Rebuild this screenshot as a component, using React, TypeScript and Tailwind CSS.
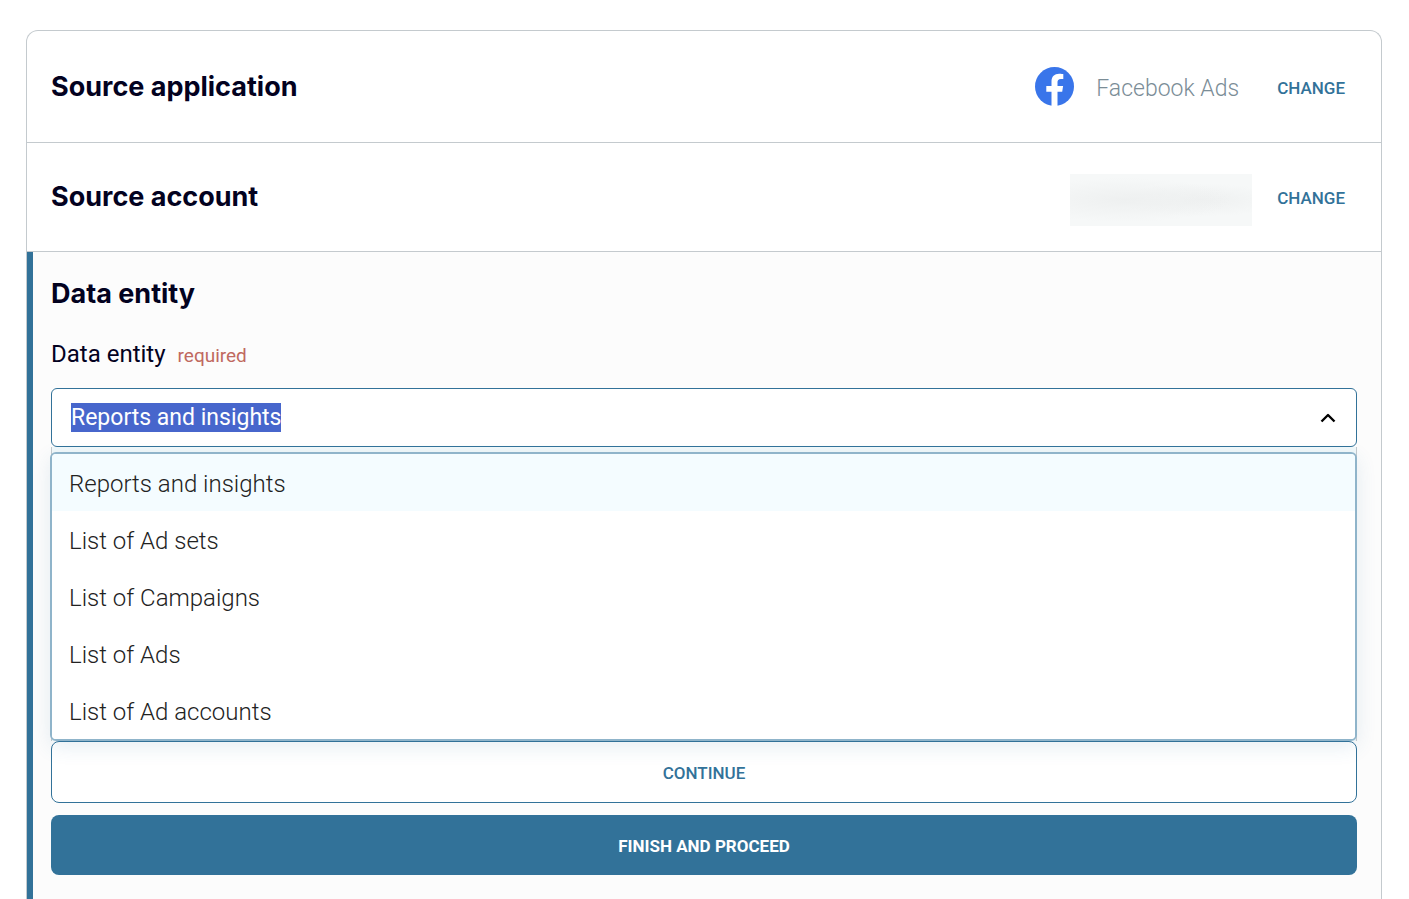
import { useEffect, useRef } from 'react';

const entities = [
  'Reports and insights',
  'List of Ad sets',
  'List of Campaigns',
  'List of Ads',
  'List of Ad accounts',
];

const headingClass = "font-['Inter',sans-serif] text-[27px] leading-9 font-bold text-[#03021f]";

function ChangeButton({ label }: { label: string }) {
  return (
    <button type="button" aria-label={label} className="pt-0.5 text-[17px] leading-6 font-medium text-[#327299]">
      CHANGE
    </button>
  );
}

function FacebookLogo() {
  return (
    <svg viewBox="0 0 39 39" className="size-[39px]" aria-hidden="true">
      <circle cx="19.5" cy="19.5" r="19.5" fill="#3975ea" />
      <path
        fill="#fff"
        d="M16.5 39V24.7h-5.2v-5.600h5.2v-4.500c0-5.200 3-7.900 7.600-7.900 2 0 4.200.4 4.200.4v4.800h-2.400c-2.500 0-3.400 1.500-3.400 3.100v4.100h5.600l-.9 5.600h-4.700V39z"
      />
    </svg>
  );
}

export default function App() {
  const inputRef = useRef<HTMLInputElement>(null);

  useEffect(() => {
    inputRef.current?.focus();
    inputRef.current?.select();
  }, []);

  return (
    <main className="flex min-h-screen flex-col bg-white px-[26px] pt-[30px] font-['Roboto',sans-serif]">
      <div className="mr-px flex flex-1 flex-col rounded-t-xl border border-b-0 border-[#c4cace]">
        <section className="flex h-28 items-center justify-between border-b border-[#c4cace] pr-9 pl-6">
          <h2 className={headingClass}>Source application</h2>
          <div className="flex items-center">
            <FacebookLogo />
            <span className="mr-[38px] ml-[22px] pt-1 text-[23px] leading-8 font-light text-[#7b8d97]">Facebook Ads</span>
            <ChangeButton label="Change source application" />
          </div>
        </section>

        <section className="flex h-[109px] items-center justify-between border-b border-[#c4cace] pr-9 pl-6">
          <h2 className={headingClass}>Source account</h2>
          <div className="flex items-center gap-[25px]">
            <div className="mt-1.5 h-[52px] w-[182px] bg-[#f6f8f8] bg-[radial-gradient(ellipse_at_30%_50%,#eef0f0_0%,transparent_60%),radial-gradient(ellipse_at_72%_50%,#eef0f0_0%,transparent_45%)]" />
            <ChangeButton label="Change source account" />
          </div>
        </section>

        <section className="flex-1 border-l-[6px] border-[#327299] bg-[#fcfcfc] pt-6 pr-6 pb-6 pl-[18px]">
          <h2 className={headingClass}>Data entity</h2>
          <div className="mt-6 flex items-baseline gap-3">
            <label htmlFor="entity" className="text-[24px] leading-9 text-[#03021f]">
              Data entity
            </label>
            <span className="text-[19px] leading-9 text-[#c0695f]">required</span>
          </div>

          <div className="mt-3.5 flex h-[59px] items-center rounded-md border border-[#327299] bg-white pr-5 pl-[19px]">
            <input
              ref={inputRef}
              id="entity"
              role="combobox"
              aria-expanded="true"
              aria-controls="entity-options"
              defaultValue="Reports and insights"
              className="h-[29px] min-w-0 flex-1 bg-transparent text-[23px] leading-[29px] text-[#222] outline-none selection:bg-[#4766cc] selection:text-white"
            />
            <svg viewBox="0 0 16 10" className="h-[10px] w-4" fill="none" stroke="#000" strokeWidth="2.4" aria-hidden="true">
              <path d="M1.5 8.500 8 2l6.500 6.500" strokeLinejoin="round" />
            </svg>
          </div>

          <div className="border-x border-[#c4cace] bg-[#f1f8fa] pt-[5px]">
            <ul
              id="entity-options"
              role="listbox"
              aria-label="Data entity"
              className="relative -mr-px -ml-0.5 overflow-hidden rounded-md border-2 border-[#8fb4ca] bg-white shadow-[0_6px_20px_rgba(50,114,153,0.12)]"
            >
              {entities.map((name, i) => (
                <li
                  key={name}
                  role="option"
                  aria-selected={i === 0}
                  className={
                    'flex h-[57px] items-center px-[17px] pt-0.5 text-[24px] leading-8 font-light text-[#222] ' +
                    (i === 0 ? 'bg-[#f4fcff]' : 'bg-white')
                  }
                >
                  {name}
                </li>
              ))}
            </ul>
          </div>

          <button
            type="button"
            className="block h-[62px] w-full rounded-lg border border-[#327299] bg-white pt-1 text-[17px] font-medium text-[#327299]"
          >
            CONTINUE
          </button>
          <button
            type="button"
            className="mt-3 block h-[60px] w-full rounded-lg bg-[#327299] pt-1 text-[17px] font-bold text-white"
          >
            FINISH AND PROCEED
          </button>
        </section>
      </div>
    </main>
  );
}
